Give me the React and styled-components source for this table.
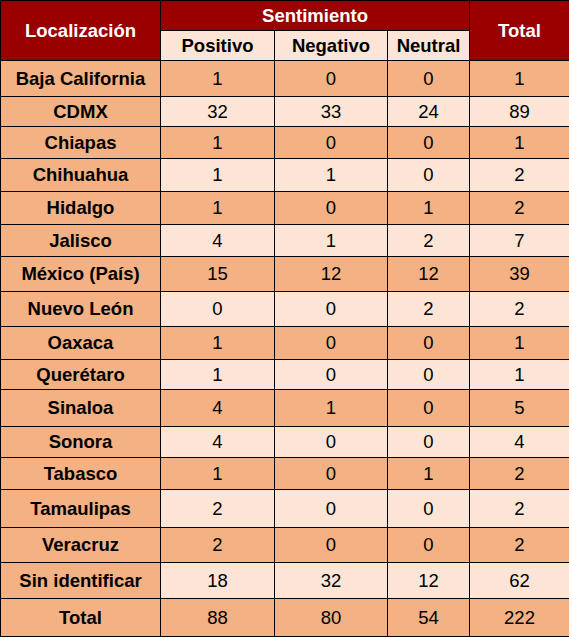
import styled, { createGlobalStyle } from "styled-components";

const Global = createGlobalStyle`
  body {
    margin: 0;
    background: #ffffff;
    font-family: "Liberation Sans", Arial, sans-serif;
  }
`;

const ORANGE = "#f4b183";
const LIGHT = "#fce4d6";
const HEAD = "#990000";

// h = distance between grid lines in the sheet
const rows = [
  { name: "Baja California", v: [1, 0, 0, 1], h: 36 },
  { name: "CDMX", v: [32, 33, 24, 89], h: 30 },
  { name: "Chiapas", v: [1, 0, 0, 1], h: 32 },
  { name: "Chihuahua", v: [1, 1, 0, 2], h: 33 },
  { name: "Hidalgo", v: [1, 0, 1, 2], h: 33 },
  { name: "Jalisco", v: [4, 1, 2, 7], h: 32 },
  { name: "México (País)", v: [15, 12, 12, 39], h: 35 },
  { name: "Nuevo León", v: [0, 0, 2, 2], h: 35 },
  { name: "Oaxaca", v: [1, 0, 0, 1], h: 33 },
  { name: "Querétaro", v: [1, 0, 0, 1], h: 30 },
  { name: "Sinaloa", v: [4, 1, 0, 5], h: 37 },
  { name: "Sonora", v: [4, 0, 0, 4], h: 31 },
  { name: "Tabasco", v: [1, 0, 1, 2], h: 32 },
  { name: "Tamaulipas", v: [2, 0, 0, 2], h: 38 },
  { name: "Veracruz", v: [2, 0, 0, 2], h: 35 },
  { name: "Sin identificar", v: [18, 32, 12, 62], h: 36 },
];

const Table = styled.table`
  width: 569px;
  table-layout: fixed;
  border-collapse: collapse;
  font-size: 18.5px;
  color: #000;
`;

const HeadCell = styled.th`
  background: ${HEAD};
  color: #fff;
  font-weight: bold;
  border: 1px solid #000;
  padding: 0;
  height: ${(p) => p.$h}px;
  text-align: center;
  vertical-align: middle;
`;

const SubHead = styled.th`
  background: ${LIGHT};
  font-weight: bold;
  border: 1px solid #000;
  padding: 0;
  height: 29px;
  text-align: center;
`;

const NameCell = styled.td`
  background: ${ORANGE};
  font-weight: bold;
  border: 1px solid #000;
  padding: 0;
  height: ${(p) => p.$h - 1}px;
  text-align: center;
`;

const NumCell = styled.td`
  background: ${(p) => (p.$light ? LIGHT : ORANGE)};
  border: 1px solid #000;
  padding: 0;
  text-align: center;
`;

export default function App() {
  const totals = [88, 80, 54, 222];
  return (
    <>
      <Global />
      <Table>
        <colgroup>
          <col style={{ width: 160 }} />
          <col style={{ width: 114 }} />
          <col style={{ width: 113 }} />
          <col style={{ width: 82 }} />
          <col style={{ width: 100 }} />
        </colgroup>
        <thead>
          <tr>
            <HeadCell rowSpan={2}>Localización</HeadCell>
            <HeadCell colSpan={3} $h={29}>
              Sentimiento
            </HeadCell>
            <HeadCell rowSpan={2}>Total</HeadCell>
          </tr>
          <tr>
            <SubHead>Positivo</SubHead>
            <SubHead>Negativo</SubHead>
            <SubHead>Neutral</SubHead>
          </tr>
        </thead>
        <tbody>
          {rows.map((r, i) => (
            <tr key={r.name}>
              <NameCell $h={r.h}>{r.name}</NameCell>
              {r.v.map((n, j) => (
                <NumCell key={j} $light={i % 2 === 1}>
                  {n}
                </NumCell>
              ))}
            </tr>
          ))}
          <tr>
            <NameCell $h={38}>Total</NameCell>
            {totals.map((n, j) => (
              <NumCell key={j}>{n}</NumCell>
            ))}
          </tr>
        </tbody>
      </Table>
    </>
  );
}
